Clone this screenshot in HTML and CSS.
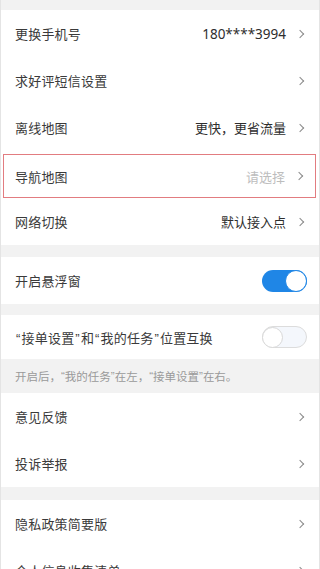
FILE: index.html
```html
<!DOCTYPE html>
<html lang="zh-CN">
<head>
<meta charset="utf-8">
<link rel="stylesheet" href="styles.css">
</head>
<body>
<div class="page">
  <div class="gap gap-top"></div>
  <div class="group">
    <div class="row"><span class="label">更换手机号</span><span class="right"><span class="value num">180****3994</span><span class="chev"></span></span></div>
    <div class="row"><span class="label">求好评短信设置</span><span class="right"><span class="chev"></span></span></div>
    <div class="row"><span class="label">离线地图</span><span class="right"><span class="value">更快，更省流量</span><span class="chev"></span></span></div>
    <div class="row-wrap"><div class="row boxed"><span class="label">导航地图</span><span class="right"><span class="value placeholder">请选择</span><span class="chev"></span></span></div></div>
    <div class="row"><span class="label">网络切换</span><span class="right"><span class="value">默认接入点</span><span class="chev"></span></span></div>
  </div>
  <div class="gap"></div>
  <div class="group">
    <div class="row"><span class="label">开启悬浮窗</span><span class="switch on"><span class="knob"></span></span></div>
  </div>
  <div class="gap gap-sm"></div>
  <div class="group">
    <div class="row row-short"><span class="label"><span class="q">“</span>接单设置<span class="q">”</span>和<span class="q">“</span>我的任务<span class="q">”</span>位置互换</span><span class="switch off"><span class="knob"></span></span></div>
  </div>
  <div class="hint">开启后，<span class="q">“</span>我的任务<span class="q">”</span>在左，<span class="q">“</span>接单设置<span class="q">”</span>在右。</div>
  <div class="group">
    <div class="row"><span class="label">意见反馈</span><span class="right"><span class="chev"></span></span></div>
    <div class="row"><span class="label">投诉举报</span><span class="right"><span class="chev"></span></span></div>
  </div>
  <div class="gap gap-lg"></div>
  <div class="group">
    <div class="row"><span class="label">隐私政策简要版</span><span class="right"><span class="chev"></span></span></div>
    <div class="row"><span class="label">个人信息收集清单</span><span class="right"><span class="chev"></span></span></div>
  </div>
</div>
</body>
</html>
```
FILE: styles.css
```css
* { box-sizing: border-box; }
html, body { margin: 0; padding: 0; }
body {
  background: #f2f2f2;
  font-family: "Noto Sans CJK SC", "Noto Sans", sans-serif;
  color: #333;
  overflow: hidden;
}
.page {
  width: 320px;
  border-left: 1px solid #e4e4e4;
  border-right: 1px solid #e4e4e4;
  min-height: 569px;
}
.gap { height: 12px; background: #f2f2f2; }
.gap-top { height: 10px; }
.gap-sm { height: 11px; }
.gap-lg { height: 13px; }
.group { background: #fff; }
.row {
  height: 47px;
  display: flex;
  align-items: center;
  justify-content: space-between;
  padding: 0 13px 0 14px;
  font-size: 13px;
}
.row-short { height: 44px; }
.row-wrap { padding: 3px 3px 0 2px; height: 47px; }
.row.boxed {
  height: 44px;
  border: 1px solid #e27c80;
  padding: 0 10px 0 11px;
}
.label { color: #3a3a3a; letter-spacing: 0.2px; }
.q { font-family: "Liberation Sans", sans-serif; }
.label .q { margin: 0 1px; }
.right { display: flex; align-items: center; }
.value { color: #2e2e2e; margin-right: 11px; }
.num { font-family: "Noto Sans", sans-serif; font-size: 13.5px; }
.placeholder { color: #bdbdbd; }
.chev {
  width: 6px;
  height: 6px;
  border-top: 1.3px solid #8a8a8a;
  border-right: 1.3px solid #8a8a8a;
  transform: rotate(45deg);
  margin-right: 3px;
}
.switch {
  width: 45px;
  height: 22px;
  border-radius: 11px;
  display: flex;
  align-items: center;
  margin-right: -1px;
}
.switch.on { background: #1f86e6; justify-content: flex-end; }
.switch.off {
  background: #f4f7fc;
  border: 1px solid #dcdcdc;
  justify-content: flex-start;
}
.knob {
  width: 22px;
  height: 22px;
  border-radius: 50%;
  background: #fff;
}
.switch.on .knob { border: 1.5px solid #1f86e6; }
.switch.off .knob {
  width: 21px;
  height: 21px;
  margin-left: -1px;
  border: 1px solid #d8d8d8;
  background: #fff;
}
.hint {
  height: 34px;
  display: flex;
  align-items: center;
  padding-left: 14px;
  font-size: 11.5px;
  color: #9a9a9a;
  background: #f2f2f2;
}
```
